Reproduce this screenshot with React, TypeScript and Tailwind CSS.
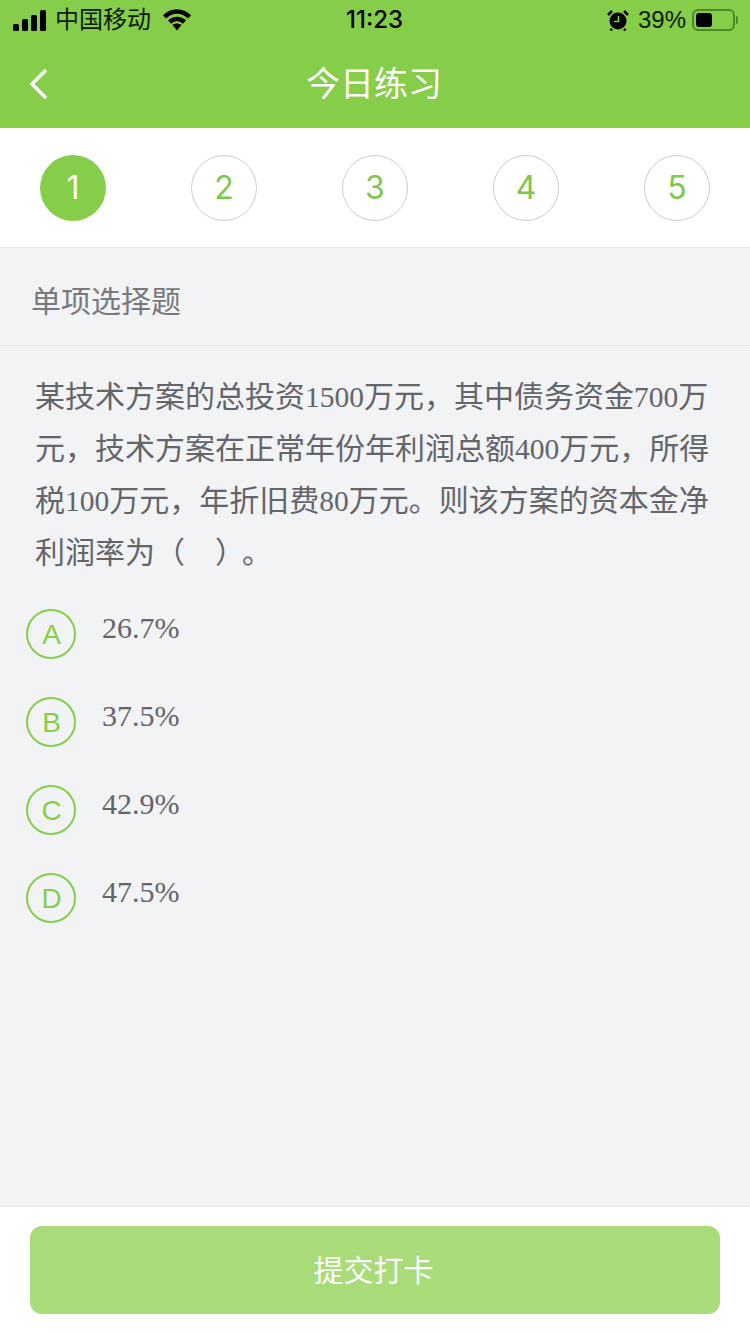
import React from 'react';

const steps = [1, 2, 3, 4, 5];

const options = [
  { key: 'A', text: '26.7%' },
  { key: 'B', text: '37.5%' },
  { key: 'C', text: '42.9%' },
  { key: 'D', text: '47.5%' },
];

const sans = "font-['Liberation_Sans','Noto_Sans_CJK_SC',sans-serif]";
const serif = "font-['Liberation_Serif','Noto_Sans_CJK_SC',serif]";
const inter = "font-['Inter','Liberation_Sans',sans-serif]";

// digits in the stem are set a touch smaller than the chinese text
const Num: React.FC<{ children: React.ReactNode }> = ({ children }) => (
  <span className="text-[29.5px]">{children}</span>
);

const StatusBar: React.FC = () => (
  <div className={`flex items-center justify-between h-10 pl-[13px] pr-[12px] ${sans}`}>
    <div className="flex items-center w-[250px] text-[#0b1a05]">
      <svg width="33" height="21" viewBox="0 0 33 21" fill="#000" className="mr-[9px]">
        <rect x="0" y="14" width="6" height="7" rx="1.5" />
        <rect x="9" y="9" width="6" height="12" rx="1.5" />
        <rect x="18" y="5" width="6" height="16" rx="1.5" />
        <rect x="27" y="0" width="6" height="21" rx="1.5" />
      </svg>
      <span className="text-[24px] leading-none">中国移动</span>
      <svg width="28" height="22" viewBox="0 0 28 22" className="ml-[12px]">
        <path d="M1.5 8 C8.5 0.5 19.5 0.5 26.5 8" fill="none" stroke="#000" strokeWidth="4.5" />
        <path d="M6.5 13 C11 9 17 9 21.5 13" fill="none" stroke="#000" strokeWidth="4.5" />
        <path d="M9.5 16 C12 14 16 14 18.5 16 L14 21.5 Z" fill="#000" />
      </svg>
    </div>
    <span className={`text-[24px] font-medium leading-none text-black ml-[-2px] ${inter}`}>11:23</span>
    <div className="flex items-center justify-end w-[250px] text-[#0b1a05]">
      <svg width="22" height="22" viewBox="0 0 22 22" className="mr-[9px]">
        <circle cx="11" cy="12" r="8.5" fill="#000" />
        <path d="M1 6 L5 2 M21 6 L17 2 M5 20 L3.5 21.5 M17 20 L18.5 21.5" stroke="#000" strokeWidth="2.5" />
        <path d="M11.5 7 V12.5 H7" fill="none" stroke="#86cd4a" strokeWidth="1.6" />
      </svg>
      <span className="text-[24px] leading-none">39%</span>
      <div className="ml-[6px] flex items-center">
        <div className="w-[43px] h-[22px] rounded-[6px] border-2 border-[#4c8a24] p-[2px]">
          <div className="w-[16px] h-full rounded-[3px] bg-black" />
        </div>
        <div className="w-[2px] h-[8px] ml-[1px] rounded-r bg-[#4c8a24]" />
      </div>
    </div>
  </div>
);

const App: React.FC = () => {
  return (
    <div className={`w-[750px] h-[1334px] flex flex-col bg-[#f2f3f5] ${sans}`}>
      <div className="bg-[#86cd4a]">
        <StatusBar />
        <div className="relative h-[88px] flex items-center justify-center">
          <svg width="22" height="34" viewBox="0 0 22 34" className="absolute left-[28px] top-[27px]">
            <path d="M18 3 L4 17 L18 31" fill="none" stroke="#fff" strokeWidth="3.5" />
          </svg>
          <span className="text-[34px] leading-none text-white pr-[2px]">今日练习</span>
        </div>
      </div>

      <div className={`h-[120px] shrink-0 bg-white border-b border-[#e6e7e9] flex items-center justify-between px-10 ${inter}`}>
        {steps.map((n) =>
          n === 1 ? (
            <div key={n} className="w-[66px] h-[66px] rounded-full bg-[#86cd4a] flex items-center justify-center text-white text-[32px]">
              {n}
            </div>
          ) : (
            <div key={n} className="w-[66px] h-[66px] rounded-full border border-[#cccccc] flex items-center justify-center text-[#7cc84a] text-[32px]">
              {n}
            </div>
          )
        )}
      </div>

      <div className="h-[98px] shrink-0 border-b border-[#e6e7e9] flex items-center pl-[31px] pt-[11px] text-[30px] leading-none text-[#77797c]">
        单项选择题
      </div>

      <div className={`pl-[35px] pt-[25px] text-[#63656a] text-[30px] leading-[52px] whitespace-pre ${serif}`}>
        <div>某技术方案的总投资<Num>1500</Num>万元，其中债务资金<Num>700</Num>万</div>
        <div>元，技术方案在正常年份年利润总额<Num>400</Num>万元，所得</div>
        <div>税<Num>100</Num>万元，年折旧费<Num>80</Num>万元。则该方案的资本金净</div>
        <div>利润率为（　）<span className="pl-[12px]">。</span></div>
      </div>

      <div className="pl-[26px] pt-[30px] flex flex-col gap-[38px]">
        {options.map((opt) => (
          <div key={opt.key} className="flex items-start">
            <div className={`w-[50px] h-[50px] rounded-full border-2 border-[#86cd4a] flex items-center justify-center pt-[2px] pl-[1px] text-[#86cd4a] text-[28px] ${sans}`}>
              {opt.key}
            </div>
            <div className={`ml-[26px] mt-[2px] text-[#63656a] text-[30px] leading-[34px] ${serif}`}>{opt.text}</div>
          </div>
        ))}
      </div>

      <div className="mt-auto h-[128px] shrink-0 bg-white border-t border-[#e6e7e9] px-[30px] pt-[19px]">
        <div className="h-[88px] rounded-[12px] bg-[#a9dc78] flex items-center justify-center text-white text-[30px] pr-[3px]">
          提交打卡
        </div>
      </div>
    </div>
  );
};

export default App;
